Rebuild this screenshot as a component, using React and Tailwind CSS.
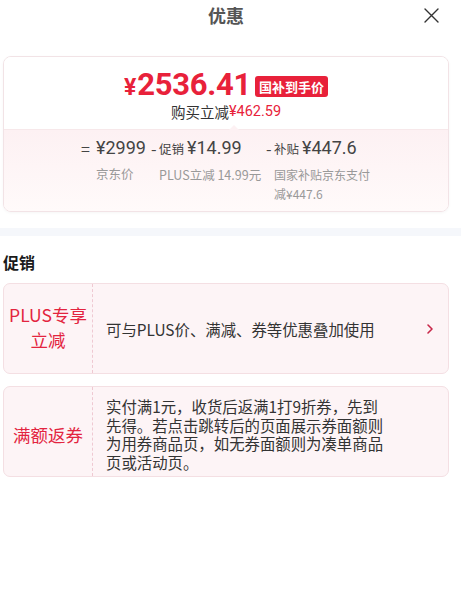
import React from "react";

const F = { fontFamily: '"Noto Sans CJK SC", "Noto Sans", sans-serif' };

export default function App() {
  return (
    <div
      className="w-[461px] h-[600px] bg-white text-[#333]"
      style={F}
    >
      {/* header */}
      <div className="w-[452px] h-[30px] grid grid-cols-[1fr_auto_1fr] items-center">
        <div />
        <div className="text-[18px] leading-[24px] font-bold text-[#555]">优惠</div>
        <div className="flex justify-end pr-[13px]">
          <svg width="15" height="15" viewBox="0 0 15 15" fill="none" stroke="#333" strokeWidth="1.4" strokeLinecap="round">
            <path d="M1 1 L14 14 M14 1 L1 14" />
          </svg>
        </div>
      </div>

      {/* price card */}
      <div className="ml-[3px] mt-[26px] w-[446px] h-[156px] rounded-[8px] border border-[#f2e3e6] shadow-[0_1px_3px_rgba(0,0,0,0.04)] overflow-hidden flex flex-col">
        <div className="h-[72px] bg-white flex flex-col items-center pt-[13px]">
          <div className="flex items-center h-[30px]">
            <span
              className="text-[#e8213a] font-bold text-[23px] leading-none mr-[1px] mt-[5px]"
              style={{ fontFamily: "Roboto, sans-serif" }}
            >
              ¥
            </span>
            <span
              className="text-[#e8213a] font-bold text-[31px] leading-[30px] tracking-[-0.3px]"
              style={{ fontFamily: "Roboto, sans-serif" }}
            >
              2536.41
            </span>
            <span className="ml-[4px] mt-[2px] bg-[#e8213a] text-white text-[13px] font-bold leading-[21px] h-[21px] px-[4px] rounded-[3px]">
              国补到手价
            </span>
          </div>
          <div className="mt-[3px] text-[14.5px] leading-[18px] flex items-center">
            <span className="text-[#333]">购买立减</span>
            <span className="text-[#e8213a]" style={{ fontFamily: "Roboto, sans-serif" }}>¥462.59</span>
          </div>
        </div>
        <div className="relative flex-1 border-t border-[#f7e8ea] bg-gradient-to-b from-[#fdf1f3] to-[#fffafa] flex justify-center pt-[5px] pl-[3px]">
          <div className="absolute left-[225px] -top-[5px] w-0 h-0 border-l-[5px] border-r-[5px] border-b-[5px] border-l-transparent border-r-transparent border-b-[#fdf1f3]" />
          {/* col1 */}
          <div className="flex">
            <span className="w-[15px] text-[16px] leading-[26px] text-[#444]">=</span>
            <div className="w-[55px]">
              <div className="text-[18px] leading-[26px] text-[#444]" style={{ fontFamily: "Roboto, sans-serif" }}>¥2999</div>
              <div className="text-[12.5px] leading-[19px] text-[#999] mt-[3px]">京东价</div>
            </div>
          </div>
          {/* col2 */}
          <div className="flex">
            <span className="w-[8px] text-[16px] leading-[26px] text-[#444]">-</span>
            <div className="w-[107px]">
              <div className="flex items-baseline leading-[26px]">
                <span className="text-[12.5px] text-[#444] mr-[3px]">促销</span>
                <span className="text-[18px] text-[#444]" style={{ fontFamily: "Roboto, sans-serif" }}>¥14.99</span>
              </div>
              <div className="text-[12.5px] leading-[19px] text-[#999] mt-[3px]">PLUS立减 14.99元</div>
            </div>
          </div>
          {/* col3 */}
          <div className="flex">
            <span className="w-[8px] text-[16px] leading-[26px] text-[#444]">-</span>
            <div className="w-[100px]">
              <div className="flex items-baseline leading-[26px]">
                <span className="text-[12.5px] text-[#444] mr-[3px]">补贴</span>
                <span className="text-[18px] text-[#444]" style={{ fontFamily: "Roboto, sans-serif" }}>¥447.6</span>
              </div>
              <div className="text-[12px] leading-[19px] text-[#999] mt-[3px]">国家补贴京东支付减¥447.6</div>
            </div>
          </div>
        </div>
      </div>

      {/* band */}
      <div className="mt-[16px] h-[8px] w-full bg-[#f5f7fb]" />

      {/* heading */}
      <div className="ml-[3px] mt-[15px] text-[16px] leading-[22px] font-bold text-[#1a1a1a]">促销</div>

      {/* card 2 */}
      <div className="ml-[3px] mt-[10px] w-[446px] h-[91px] rounded-[7px] border border-[#f4dfe3] bg-[#fdf4f6] flex">
        <div className="w-[89px] border-r border-dashed border-[#efc9d2] flex items-center justify-center text-center text-[#e3243f] text-[17.5px] leading-[25px] pb-[4px]">
          <div>PLUS专享<br />立减</div>
        </div>
        <div className="flex-1 flex items-center pl-[13px] pr-[14px]">
          <div className="flex-1 text-[15.4px] leading-[20px] text-[#333]">可与PLUS价、满减、券等优惠叠加使用</div>
          <svg width="8" height="12" viewBox="0 0 8 12" fill="none" stroke="#c8284a" strokeWidth="1.6" strokeLinecap="round" strokeLinejoin="round">
            <path d="M2 2 L6 6 L2 10" />
          </svg>
        </div>
      </div>

      {/* card 3 */}
      <div className="ml-[3px] mt-[12px] w-[446px] h-[91px] rounded-[7px] border border-[#f4dfe3] bg-[#fdf4f6] flex">
        <div className="w-[89px] border-r border-dashed border-[#efc9d2] flex items-center justify-center text-center text-[#e3243f] text-[17.5px] leading-[25px] pt-[6px]">
          满额返券
        </div>
        <div className="flex-1 flex items-center pl-[13px] pt-[5px]">
          <div className="w-[285px] text-[15.4px] leading-[18.5px] text-[#333]">
            实付满1元，收货后返满1打9折券，先到先得。若点击跳转后的页面展示券面额则为用券商品页，如无券面额则为凑单商品页或活动页。
          </div>
        </div>
      </div>
    </div>
  );
}
